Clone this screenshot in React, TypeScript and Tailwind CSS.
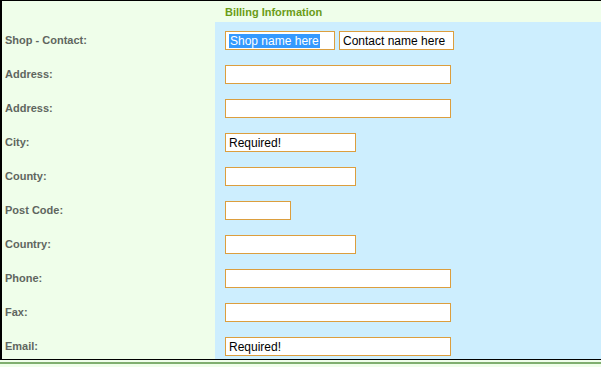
const rows: { label: string; fields: { w: string; value?: string; selected?: boolean }[] }[] = [
  {
    label: "Shop - Contact:",
    fields: [
      { w: "w-[110px]", value: "Shop name here", selected: true },
      { w: "w-[115px]", value: "Contact name here" },
    ],
  },
  { label: "Address:", fields: [{ w: "w-[226px]" }] },
  { label: "Address:", fields: [{ w: "w-[226px]" }] },
  { label: "City:", fields: [{ w: "w-[131px]", value: "Required!" }] },
  { label: "County:", fields: [{ w: "w-[131px]" }] },
  { label: "Post Code:", fields: [{ w: "w-[66px]" }] },
  { label: "Country:", fields: [{ w: "w-[131px]" }] },
  { label: "Phone:", fields: [{ w: "w-[226px]" }] },
  { label: "Fax:", fields: [{ w: "w-[226px]" }] },
  { label: "Email:", fields: [{ w: "w-[226px]", value: "Required!" }] },
];

function Field({ w, value, selected }: { w: string; value?: string; selected?: boolean }) {
  return (
    <div
      className={`${w} flex h-[19px] items-center border border-solid border-[#dc9e3e] bg-white pl-[3px] text-[12px] leading-none text-black`}
    >
      {value ? (
        selected ? (
          <span className="bg-[#3399ff] px-px py-px text-white">{value}</span>
        ) : (
          <span>{value}</span>
        )
      ) : null}
    </div>
  );
}

export default function App() {
  return (
    <div
      className="h-[367px] w-[601px] overflow-hidden bg-[#effeea]"
      style={{ fontFamily: '"Liberation Sans", Arial, sans-serif' }}
    >
      <div className="h-[360px] overflow-hidden border-t border-b border-l-2 border-black">
        <div className="grid h-[21px] grid-cols-[213px_1fr]">
          <div />
          <div className="pl-[10px] pt-[3px] text-[11px] font-bold text-[#6a9c17]">
            Billing Information
          </div>
        </div>
        {rows.map((row, i) => (
          <div key={i} className="grid h-[34px] grid-cols-[213px_1fr]">
            <div className="pl-[3px] pt-[10px] text-[11px] font-bold text-[#5f665f]">
              {row.label}
            </div>
            <div className="flex gap-[4px] bg-[#cdeefe] pl-[10px] pt-[9px]">
              {row.fields.map((f, j) => (
                <Field key={j} {...f} />
              ))}
            </div>
          </div>
        ))}
      </div>
      <div className="mt-[2px] h-[2px] bg-[#7fae6f]" />
    </div>
  );
}
